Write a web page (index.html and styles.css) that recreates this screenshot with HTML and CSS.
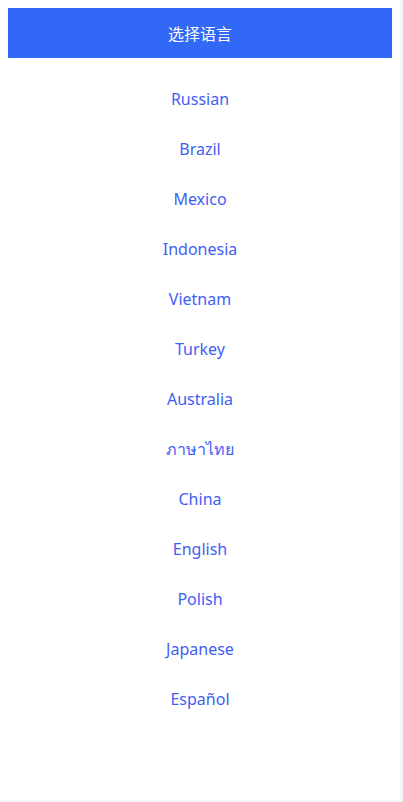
FILE: index.html
```html
<!DOCTYPE html>
<html lang="zh">
<head>
<meta charset="utf-8">
<link rel="stylesheet" href="styles.css">
</head>
<body>
<div class="panel">
  <div class="header">选择语言</div>
  <ul class="langs">
    <li>Russian</li>
    <li>Brazil</li>
    <li>Mexico</li>
    <li>Indonesia</li>
    <li>Vietnam</li>
    <li>Turkey</li>
    <li>Australia</li>
    <li>ภาษาไทย</li>
    <li>China</li>
    <li>English</li>
    <li>Polish</li>
    <li>Japanese</li>
    <li>Español</li>
  </ul>
</div>
</body>
</html>
```
FILE: styles.css
```css
html, body {
  margin: 0;
  padding: 0;
  background: #f2f3f5;
}
body {
  width: 403px;
  height: 802px;
  overflow: hidden;
}
.panel {
  width: 400px;
  height: 800px;
  background: #ffffff;
  padding: 8px;
  box-sizing: border-box;
  font-family: "Noto Sans", "Noto Sans CJK SC", "DejaVu Sans", sans-serif;
}
.header {
  height: 50px;
  background: #3168f6;
  color: #ffffff;
  font-size: 16px;
  display: flex;
  align-items: center;
  justify-content: center;
}
.langs {
  list-style: none;
  margin: 0;
  padding: 16px 0 0;
}
.langs li {
  height: 50px;
  display: flex;
  align-items: center;
  justify-content: center;
  font-size: 16px;
  color: #3f5ef5;
}
```
